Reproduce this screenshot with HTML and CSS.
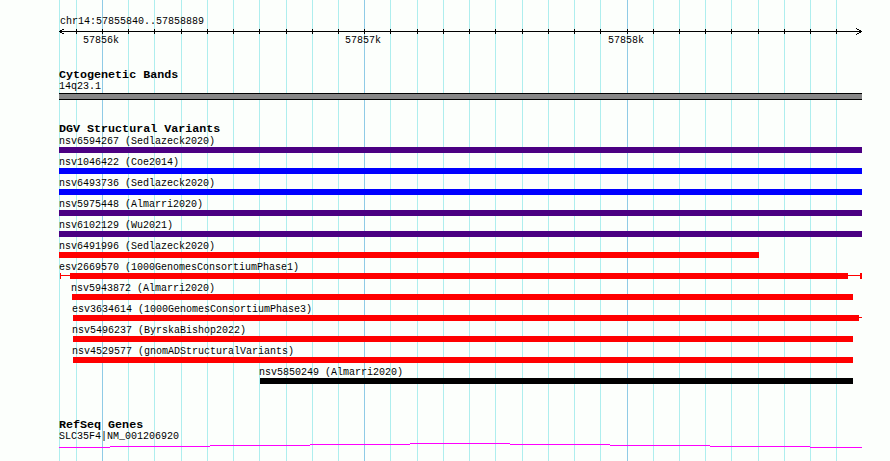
FILE: index.html
```html
<!DOCTYPE html>
<html lang="en">
<head>
  <meta charset="UTF-8">
  <title>chr14:57855840..57858889</title>
  <link rel="stylesheet" href="styles.css">
</head>
<body>
  <div class="browser">

    <!-- Ruler -->
    <div class="ruler">
      <div class="position">chr14:57855840..57858889</div>
      <svg class="axis" width="890" height="7" viewBox="0 0 890 7">
        <path d="M59 3.5H862" stroke="#000" stroke-width="1"/>
        <path d="M76.5 1v5M102.5 1v5M128.5 1v5M154.5 1v5M181.5 1v5M207.5 1v5M233.5 1v5M259.5 1v5M286.5 1v5M312.5 1v5M338.5 1v5M364.5 1v5M390.5 1v5M417.5 1v5M443.5 1v5M469.5 1v5M495.5 1v5M522.5 1v5M548.5 1v5M574.5 1v5M600.5 1v5M627.5 1v5M653.5 1v5M679.5 1v5M705.5 1v5M731.5 1v5M758.5 1v5M784.5 1v5M810.5 1v5M836.5 1v5" stroke="#000" stroke-width="1"/>
        <path d="M64.5 0.5L59.5 3.5L64.5 6.5" fill="none" stroke="#000" stroke-width="1"/>
        <path d="M856.5 0.5L861.5 3.5L856.5 6.5" fill="none" stroke="#000" stroke-width="1"/>
      </svg>
      <div class="tick-labels">
        <span>57856k</span>
        <span style="margin-left:226px">57857k</span>
        <span style="margin-left:227px">57858k</span>
      </div>
    </div>

    <!-- Cytogenetic Bands -->
    <section class="track track-cyto">
      <h2 class="track-title">Cytogenetic Bands</h2>
      <div class="item-name">14q23.1</div>
      <div class="band"></div>
    </section>

    <!-- DGV Structural Variants -->
    <section class="track track-dgv">
      <h2 class="track-title">DGV Structural Variants</h2>

      <div class="feature">
        <div class="feature-name" style="margin-left:59px">nsv6594267 (Sedlazeck2020)</div>
        <div class="feature-bar purple" style="margin-left:59px;width:803px"></div>
      </div>
      <div class="feature">
        <div class="feature-name" style="margin-left:59px">nsv1046422 (Coe2014)</div>
        <div class="feature-bar blue" style="margin-left:59px;width:803px"></div>
      </div>
      <div class="feature">
        <div class="feature-name" style="margin-left:59px">nsv6493736 (Sedlazeck2020)</div>
        <div class="feature-bar blue" style="margin-left:59px;width:803px"></div>
      </div>
      <div class="feature">
        <div class="feature-name" style="margin-left:59px">nsv5975448 (Almarri2020)</div>
        <div class="feature-bar purple" style="margin-left:59px;width:803px"></div>
      </div>
      <div class="feature">
        <div class="feature-name" style="margin-left:59px">nsv6102129 (Wu2021)</div>
        <div class="feature-bar purple" style="margin-left:59px;width:803px"></div>
      </div>
      <div class="feature">
        <div class="feature-name" style="margin-left:59px">nsv6491996 (Sedlazeck2020)</div>
        <div class="feature-bar red" style="margin-left:59px;width:700px"></div>
      </div>
      <div class="feature">
        <div class="feature-name" style="margin-left:59px">esv2669570 (1000GenomesConsortiumPhase1)</div>
        <div class="feature-range red capped" style="margin-left:60px;width:802px">
          <div class="feature-bar red" style="margin-left:9px;width:778px"></div>
        </div>
      </div>
      <div class="feature">
        <div class="feature-name" style="margin-left:71px">nsv5943872 (Almarri2020)</div>
        <div class="feature-bar red" style="margin-left:72px;width:781px"></div>
      </div>
      <div class="feature">
        <div class="feature-name" style="margin-left:72px">esv3634614 (1000GenomesConsortiumPhase3)</div>
        <div class="feature-range red" style="margin-left:73px;width:789px">
          <div class="feature-bar red" style="width:786px"></div>
        </div>
      </div>
      <div class="feature">
        <div class="feature-name" style="margin-left:72px">nsv5496237 (ByrskaBishop2022)</div>
        <div class="feature-bar red" style="margin-left:73px;width:780px"></div>
      </div>
      <div class="feature">
        <div class="feature-name" style="margin-left:72px">nsv4529577 (gnomADStructuralVariants)</div>
        <div class="feature-bar red" style="margin-left:73px;width:780px"></div>
      </div>
      <div class="feature">
        <div class="feature-name" style="margin-left:259px">nsv5850249 (Almarri2020)</div>
        <div class="feature-bar black" style="margin-left:260px;width:593px"></div>
      </div>
    </section>

    <!-- RefSeq Genes -->
    <section class="track track-refseq">
      <h2 class="track-title">RefSeq Genes</h2>
      <div class="item-name">SLC35F4|NM_001206920</div>
      <svg class="gene" width="890" height="6" viewBox="0 0 890 6" shape-rendering="crispEdges">
        <g fill="#ff00ff">
          <rect x="59" y="5" width="51" height="1"/>
          <rect x="110" y="4" width="100" height="1"/>
          <rect x="210" y="3" width="100" height="1"/>
          <rect x="310" y="2" width="100" height="1"/>
          <rect x="410" y="1" width="100" height="1"/>
          <rect x="510" y="2" width="100" height="1"/>
          <rect x="610" y="3" width="100" height="1"/>
          <rect x="710" y="4" width="100" height="1"/>
          <rect x="810" y="5" width="52" height="1"/>
        </g>
      </svg>
    </section>

  </div>
</body>
</html>
```

FILE: styles.css
```css
/* genome browser image */
body {
  margin: 0;
  overflow: hidden;
  background: #fcfffc;
  font-family: "Liberation Mono", "DejaVu Sans Mono", monospace;
  color: #000;
}

.browser {
  --grid: #aeeeee;
  --major: #8fcbe6;
  width: 890px;
  height: 461px;
  padding-top: 16px;
  box-sizing: border-box;
  background-color: #fcfffc;
  background-image: linear-gradient(to right,
    transparent 0 59px,
    var(--grid) 59px 60px, transparent 60px 76px,
    var(--grid) 76px 77px, transparent 77px 102px,
    var(--major) 102px 103px, transparent 103px 128px,
    var(--grid) 128px 129px, transparent 129px 154px,
    var(--grid) 154px 155px, transparent 155px 181px,
    var(--grid) 181px 182px, transparent 182px 207px,
    var(--grid) 207px 208px, transparent 208px 233px,
    var(--grid) 233px 234px, transparent 234px 259px,
    var(--grid) 259px 260px, transparent 260px 286px,
    var(--grid) 286px 287px, transparent 287px 312px,
    var(--grid) 312px 313px, transparent 313px 338px,
    var(--grid) 338px 339px, transparent 339px 364px,
    var(--major) 364px 365px, transparent 365px 390px,
    var(--grid) 390px 391px, transparent 391px 417px,
    var(--grid) 417px 418px, transparent 418px 443px,
    var(--grid) 443px 444px, transparent 444px 469px,
    var(--grid) 469px 470px, transparent 470px 495px,
    var(--grid) 495px 496px, transparent 496px 522px,
    var(--grid) 522px 523px, transparent 523px 548px,
    var(--grid) 548px 549px, transparent 549px 574px,
    var(--grid) 574px 575px, transparent 575px 600px,
    var(--grid) 600px 601px, transparent 601px 627px,
    var(--major) 627px 628px, transparent 628px 653px,
    var(--grid) 653px 654px, transparent 654px 679px,
    var(--grid) 679px 680px, transparent 680px 705px,
    var(--grid) 705px 706px, transparent 706px 731px,
    var(--grid) 731px 732px, transparent 732px 758px,
    var(--grid) 758px 759px, transparent 759px 784px,
    var(--grid) 784px 785px, transparent 785px 810px,
    var(--grid) 810px 811px, transparent 811px 836px,
    var(--grid) 836px 837px, transparent 837px);
}

/* ruler */
.position {
  padding-left: 60px;
  font-size: 10px;
  line-height: 12px;
  white-space: pre;
}
.axis {
  display: block;
  shape-rendering: crispEdges;
}
.tick-labels {
  display: flex;
  padding-left: 83px;
  font-size: 10px;
  line-height: 12px;
}

/* tracks */
.track-title {
  margin: 0;
  padding-left: 59px;
  font-size: 11.7px;
  line-height: 12px;
  font-weight: bold;
  white-space: pre;
}
.track-cyto { margin-top: 22px; }
.track-dgv { margin-top: 23px; }
.track-refseq { margin-top: 35px; }

.item-name {
  padding-left: 59px;
  font-size: 10px;
  line-height: 11px;
  white-space: pre;
}

.band {
  margin: 1px 0 0 59px;
  width: 803px;
  height: 5px;
  background: #878787;
  border-top: 1px solid #000;
  border-bottom: 1px solid #000;
}

.feature {
  padding-top: 1px;
  margin-bottom: 3px;
}
.feature-name {
  font-size: 10px;
  line-height: 11px;
  white-space: pre;
}
.feature-bar {
  height: 6px;
}
.feature-range {
  display: flex;
  height: 6px;
  box-sizing: border-box;
  background: linear-gradient(#ff0000, #ff0000) no-repeat 0 2px / 100% 1px;
}
.feature-range.capped {
  border-left: 1px solid #ff0000;
  border-right: 2px solid #ff0000;
}

.purple { background-color: #4b0082; }
.blue { background-color: #0000ff; }
.red { background-color: #ff0000; }
.black { background-color: #000; }
.feature-range.red { background-color: transparent; }

.gene {
  display: block;
}
```
